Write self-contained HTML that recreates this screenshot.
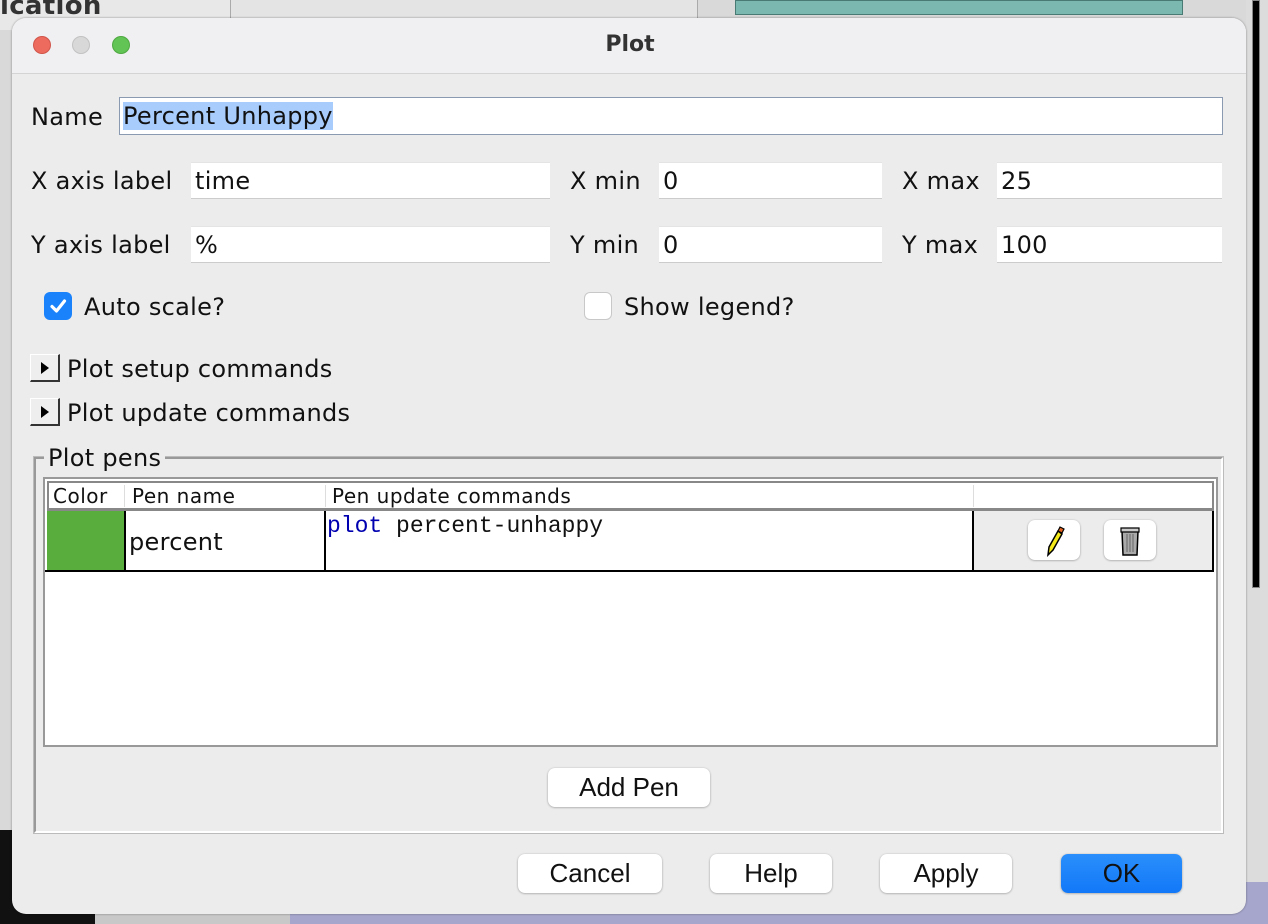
<!DOCTYPE html>
<html><head><style>
*{box-sizing:border-box;margin:0;padding:0}
body{width:1268px;height:924px;overflow:hidden;background:#d9d9d9;position:relative;font-family:"DejaVu Sans","Liberation Sans",sans-serif;color:#111}
.a{position:absolute}
.t{position:absolute;font-size:24px;letter-spacing:0.3px;line-height:28px;white-space:nowrap}
.f{position:absolute;background:#fff;border-bottom:1px solid #ccc;border-top:1px solid #e4e4e4;font-size:24px;letter-spacing:0.3px;line-height:36px;padding-left:4px}
.b{position:absolute;background:#fff;border-radius:7px;box-shadow:0 0.5px 2px rgba(0,0,0,.35);font-size:26px;text-align:center;font-family:"Liberation Sans",sans-serif}
.disc{position:absolute;width:30px;height:28px;background:#eee;border-top:1px solid #fff;border-left:1px solid #fff;border-right:2px solid #333;border-bottom:2px solid #333}
.disc:after{content:"";position:absolute;left:10px;top:7px;border-left:8px solid #000;border-top:6px solid transparent;border-bottom:6px solid transparent}
.h{font-size:20px;letter-spacing:0.5px}
</style></head><body>
<div class="a" style="left:0;top:0;width:240px;height:30px;background:#e8e8e8"></div>
<div class="t" style="left:0;top:-8px;font-weight:bold;font-size:26px;color:#333">ication</div>
<div class="a" style="left:230px;top:0;width:468px;height:18px;background:#e4e4e4;border-left:1px solid #aaa;border-right:1px solid #aaa"></div>
<div class="a" style="left:735px;top:0;width:448px;height:15px;background:#7ab8b0;border:1px solid #4a7a74"></div>
<div class="a" style="left:1246px;top:0;width:22px;height:924px;background:#dcdcdc"></div>
<div class="a" style="left:1252px;top:0;width:8px;height:588px;background:#000;border:1px solid #888"></div>
<div class="a" style="left:0;top:830px;width:95px;height:94px;background:#111"></div>
<div class="a" style="left:95px;top:880px;width:195px;height:44px;background:#c8c8c8"></div>
<div class="a" style="left:290px;top:882px;width:978px;height:42px;background:#a6a6cc"></div>
<div class="a" style="left:12px;top:18px;width:1234px;height:896px;background:#ececec;border-radius:14px;box-shadow:0 0 2px rgba(0,0,0,.4);overflow:hidden">
 <div class="a" style="left:0;top:0;width:1234px;height:56px;background:#f0f0f2;border-bottom:1px solid #d4d4d4"></div>
</div>
<div class="a" style="left:33px;top:36px;width:18px;height:18px;border-radius:50%;background:#ed6a5e;border:1px solid #d0554a"></div>
<div class="a" style="left:72px;top:36px;width:18px;height:18px;border-radius:50%;background:#d8d8d8;border:1px solid #c2c2c2"></div>
<div class="a" style="left:112px;top:36px;width:18px;height:18px;border-radius:50%;background:#61c454;border:1px solid #4fa842"></div>
<div class="t" style="left:0;width:1260px;text-align:center;top:31px;font-weight:bold;font-size:22px;letter-spacing:0;color:#333">Plot</div>

<div class="t" style="left:31px;top:103px">Name</div>
<div class="f" style="left:119px;top:97px;width:1104px;height:38px;border:1px solid #8a9ab0;padding-left:3px"><span style="background:#a8cdfc">Percent Unhappy</span></div>

<div class="t" style="left:31px;top:167px">X axis label</div>
<div class="f" style="left:191px;top:162px;width:359px;height:37px">time</div>
<div class="t" style="left:570px;top:167px">X min</div>
<div class="f" style="left:659px;top:162px;width:223px;height:37px">0</div>
<div class="t" style="left:902px;top:167px">X max</div>
<div class="f" style="left:997px;top:162px;width:225px;height:37px">25</div>

<div class="t" style="left:31px;top:231px">Y axis label</div>
<div class="f" style="left:191px;top:226px;width:359px;height:37px">%</div>
<div class="t" style="left:570px;top:231px">Y min</div>
<div class="f" style="left:659px;top:226px;width:223px;height:37px">0</div>
<div class="t" style="left:902px;top:231px">Y max</div>
<div class="f" style="left:997px;top:226px;width:225px;height:37px">100</div>

<div class="a" style="left:44px;top:292px;width:28px;height:28px;border-radius:6px;background:#1a82fb"></div>
<svg class="a" style="left:44px;top:292px" width="28" height="28"><path d="M8 14.5l4.5 4.5 8-10" stroke="#fff" stroke-width="3.2" fill="none" stroke-linecap="round" stroke-linejoin="round"/></svg>
<div class="t" style="left:84px;top:293px">Auto scale?</div>
<div class="a" style="left:584px;top:292px;width:28px;height:28px;border-radius:6px;background:#fff;border:1px solid #c8c8c8"></div>
<div class="t" style="left:624px;top:293px">Show legend?</div>

<div class="disc" style="left:30px;top:354px"></div>
<div class="t" style="left:67px;top:355px">Plot setup commands</div>
<div class="disc" style="left:30px;top:398px"></div>
<div class="t" style="left:67px;top:399px">Plot update commands</div>

<div class="a" style="left:34px;top:457px;width:1189px;height:376px;border:2px solid #999;border-right-color:#fff;border-bottom-color:#fff;outline:1px solid #bbb"></div>
<div class="t" style="left:44px;top:444px;background:#ececec;padding:0 4px">Plot pens</div>
<div class="a" style="left:43px;top:477px;width:1175px;height:270px;background:#fff;border:2px solid #999"></div>
<div class="a" style="left:47px;top:481px;width:1167px;height:30px;border:2px solid #888;border-bottom:3px solid #888"></div>
<div class="t h" style="left:53px;top:482px">Color</div>
<div class="a" style="left:124px;top:485px;width:1px;height:22px;background:#ddd"></div>
<div class="t h" style="left:132px;top:482px">Pen name</div>
<div class="a" style="left:325px;top:485px;width:1px;height:22px;background:#ddd"></div>
<div class="t h" style="left:332px;top:482px">Pen update commands</div>
<div class="a" style="left:973px;top:485px;width:1px;height:22px;background:#ddd"></div>
<div class="a" style="left:47px;top:511px;width:78px;height:60px;background:#58ad3c"></div>
<div class="a" style="left:124px;top:511px;width:2px;height:60px;background:#000"></div>
<div class="t" style="left:129px;top:528px">percent</div>
<div class="a" style="left:324px;top:511px;width:2px;height:60px;background:#000"></div>
<div class="t" style="left:327px;top:512px;font-family:'Liberation Mono','DejaVu Sans Mono',monospace;font-size:23px;letter-spacing:0"><span style="color:#0000b0">plot</span> percent-unhappy</div>
<div class="a" style="left:972px;top:511px;width:2px;height:60px;background:#000"></div>
<div class="a" style="left:974px;top:511px;width:239px;height:59px;background:#ececec"></div>
<div class="a" style="left:1212px;top:511px;width:2px;height:61px;background:#000"></div>
<div class="a" style="left:45px;top:570px;width:1169px;height:2px;background:#000"></div>
<div class="b" style="left:1028px;top:520px;width:52px;height:40px"></div>
<svg class="a" style="left:1044px;top:523px" width="22" height="34"><path d="M6 30l-2 2 1-8 9-16 4 3-9 16z" fill="#f5ea1a" stroke="#000" stroke-width="1.5"/><path d="M14 8l2-4 4 2-2 4z" fill="#e06020" stroke="#000" stroke-width="1.2"/></svg>
<div class="b" style="left:1104px;top:520px;width:52px;height:40px"></div>
<svg class="a" style="left:1117px;top:523px" width="26" height="34"><path d="M5 8h16l-1 24H6z" fill="#aaa" stroke="#000" stroke-width="1.5"/><path d="M4 5h18v4H4z" fill="#ccc" stroke="#000" stroke-width="1.2"/><path d="M10 11v18M13 11v18M16 11v18" stroke="#666"/></svg>

<div class="b" style="left:548px;top:768px;width:162px;height:39px;line-height:39px">Add Pen</div>

<div class="b" style="left:518px;top:854px;width:144px;height:39px;line-height:39px">Cancel</div>
<div class="b" style="left:710px;top:854px;width:122px;height:39px;line-height:39px">Help</div>
<div class="b" style="left:880px;top:854px;width:132px;height:39px;line-height:39px">Apply</div>
<div class="b" style="left:1061px;top:854px;width:121px;height:39px;line-height:39px;background:linear-gradient(#2a8ffb,#1278f8);color:#111">OK</div>
</body></html>
